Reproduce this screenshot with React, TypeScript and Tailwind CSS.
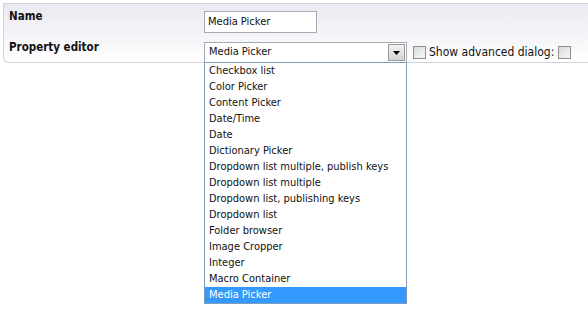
import React from 'react'

const editors = [
  'Checkbox list',
  'Color Picker',
  'Content Picker',
  'Date/Time',
  'Date',
  'Dictionary Picker',
  'Dropdown list multiple, publish keys',
  'Dropdown list multiple',
  'Dropdown list, publishing keys',
  'Dropdown list',
  'Folder browser',
  'Image Cropper',
  'Integer',
  'Macro Container',
  'Media Picker',
]

function Checkbox() {
  return <span className="block w-[13px] h-[13px] border border-[#8f8f8f] bg-gradient-to-br from-[#dcdcdc] to-[#f6f6f6] shrink-0" />
}

export default function App() {
  const selected = 'Media Picker'
  return (
    <div
      className="w-[588px] h-[331px] bg-white pt-[3px] pl-[3px] text-[11px] text-[#111]"
      style={{ fontFamily: '"DejaVu Sans Condensed", "DejaVu Sans", sans-serif' }}
    >
      <div className="h-[60px] border-t border-l border-b border-[#d2d2d6] rounded-bl-[6px] bg-gradient-to-b from-[#e9e9f1] to-white">
        <div className="flex items-start h-[31px]">
          <div className="w-[200px] pl-[5px] pt-[4px] font-bold text-[11.5px]">Name</div>
          <div className="mt-[7px] w-[113px] h-[22px] border border-[#a5acb5] bg-white px-[3px] leading-[20px]">
            Media Picker
          </div>
        </div>
        <div className="flex items-start">
          <div className="w-[200px] pl-[5px] pt-[4px] font-bold text-[11.5px]">Property editor</div>
          <div className="relative mt-[7px]">
            <div className="w-[203px] h-[21px] border border-[#a5acb5] bg-white flex items-center justify-between pl-[4px] pr-[1px]">
              <span>Media Picker</span>
              <span className="w-[17px] h-[17px] border border-[#9a9a9a] bg-gradient-to-b from-[#f2f2f2] to-[#d4d4d4] flex items-center justify-center">
                <svg width="7" height="4" viewBox="0 0 7 4">
                  <path d="M0 0h7L3.5 4z" fill="#000" />
                </svg>
              </span>
            </div>
            <ul className="absolute left-0 top-[20px] w-[203px] border border-[#7f9db9] bg-white">
              {editors.map((e) => (
                <li
                  key={e}
                  className={`h-[16px] leading-[16px] px-[4px] whitespace-nowrap ${
                    e === selected ? 'bg-[#3399ff] text-white' : ''
                  }`}
                >
                  {e}
                </li>
              ))}
            </ul>
          </div>
          <div className="flex items-center mt-[8px] ml-[6px] gap-[3px] text-[12px]">
            <Checkbox />
            <span>Show advanced dialog:</span>
            <span className="ml-[1px]"><Checkbox /></span>
          </div>
        </div>
      </div>
    </div>
  )
}
